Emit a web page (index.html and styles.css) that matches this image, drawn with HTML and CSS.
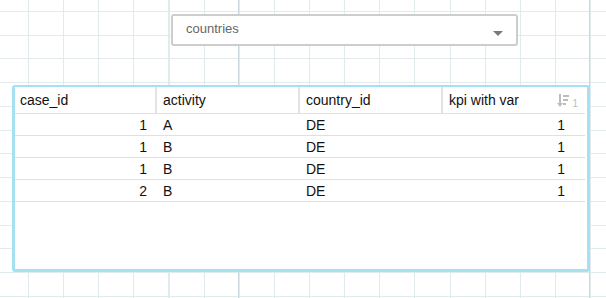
FILE: index.html
```html
<!DOCTYPE html>
<html>
<head>
<meta charset="utf-8">
<link rel="stylesheet" href="styles.css">
</head>
<body>
<div class="canvas">
  <div class="select">
    <span class="select-label">countries</span>
    <span class="caret"></span>
  </div>
  <div class="table">
    <div class="row head">
      <div class="hcell">case_id</div>
      <div class="hcell">activity</div>
      <div class="hcell">country_id</div>
      <div class="hcell last">
        <span>kpi with var</span>
        <span class="sort">
          <svg width="12" height="16" viewBox="0 0 12 16">
            <path d="M3 1v12" stroke="#bdbdbd" stroke-width="2" fill="none"/>
            <path d="M0 10l3 4 3-4z" fill="#bdbdbd"/>
            <rect x="6" y="2" width="6" height="2" fill="#bdbdbd"/>
            <rect x="6" y="6" width="5" height="2" fill="#bdbdbd"/>
            <rect x="6" y="10" width="3" height="2" fill="#bdbdbd"/>
          </svg>
          <span class="sort-num">1</span>
        </span>
      </div>
    </div>
    <div class="row">
      <div class="cell num">1</div><div class="cell">A</div><div class="cell">DE</div><div class="cell num kpi">1</div>
    </div>
    <div class="row">
      <div class="cell num">1</div><div class="cell">B</div><div class="cell">DE</div><div class="cell num kpi">1</div>
    </div>
    <div class="row">
      <div class="cell num">1</div><div class="cell">B</div><div class="cell">DE</div><div class="cell num kpi">1</div>
    </div>
    <div class="row">
      <div class="cell num">2</div><div class="cell">B</div><div class="cell">DE</div><div class="cell num kpi">1</div>
    </div>
  </div>
</div>
</body>
</html>
```
FILE: styles.css
```css
html, body {
  margin: 0;
  padding: 0;
}
body {
  width: 606px;
  height: 298px;
  overflow: hidden;
  font-family: "Liberation Sans", Arial, sans-serif;
  color: #111;
  background-color: #fff;
  background-image:
    repeating-linear-gradient(to right, transparent 0 238px, #c9d8dc 238px 239px, transparent 239px 351.25px),
    repeating-linear-gradient(to right, transparent 0 28px, #e1ebed 28px 29px, transparent 29px 35.125px),
    repeating-linear-gradient(to bottom, transparent 0 11px, #e1ebed 11px 12px, transparent 12px 23.75px);
}
.canvas {
  padding-top: 14px;
}
.select {
  margin-left: 171px;
  width: 347px;
  height: 32px;
  box-sizing: border-box;
  border: 2px solid #cdcdcd;
  border-radius: 3px;
  background: #fff;
  display: flex;
  align-items: center;
  justify-content: space-between;
  padding: 0 13px 0 13px;
}
.select-label {
  font-size: 13px;
  color: #666;
  margin-top: -3px;
}
.caret {
  width: 0;
  height: 0;
  border-left: 5px solid transparent;
  border-right: 5px solid transparent;
  border-top: 5px solid #7a7a7a;
  margin-top: 6px;
}
.table {
  margin: 39px 0 0 12px;
  width: 578px;
  height: 187px;
  box-sizing: border-box;
  border: 3px solid #a6e1f3;
  border-top-width: 2px;
  border-radius: 3px;
  background: #fff;
  font-size: 14px;
}
.row {
  display: grid;
  grid-template-columns: 143px 143px 143px 1fr;
  height: 21px;
  border-bottom: 1px solid #e0e0e0;
  margin-right: 2px;
}
.row.head {
  height: 26px;
}
.hcell {
  display: flex;
  align-items: center;
  padding-left: 5px;
  border-right: 2px solid #e3e3e3;
  margin-right: 1px;
  color: #111;
}
.hcell.last {
  border-right: none;
  margin-right: 0;
  justify-content: space-between;
  padding-right: 7px;
}
.sort {
  display: flex;
  align-items: center;
  gap: 3px;
  margin-top: 2px;
}
.sort-num {
  font-size: 10px;
  color: #bdbdbd;
  margin-top: 4px;
}
.cell {
  display: flex;
  align-items: center;
  padding-left: 5px;
}
.cell.num {
  justify-content: flex-end;
  padding-left: 0;
  padding-right: 11px;
}
.cell.kpi {
  padding-right: 20px;
}
```
